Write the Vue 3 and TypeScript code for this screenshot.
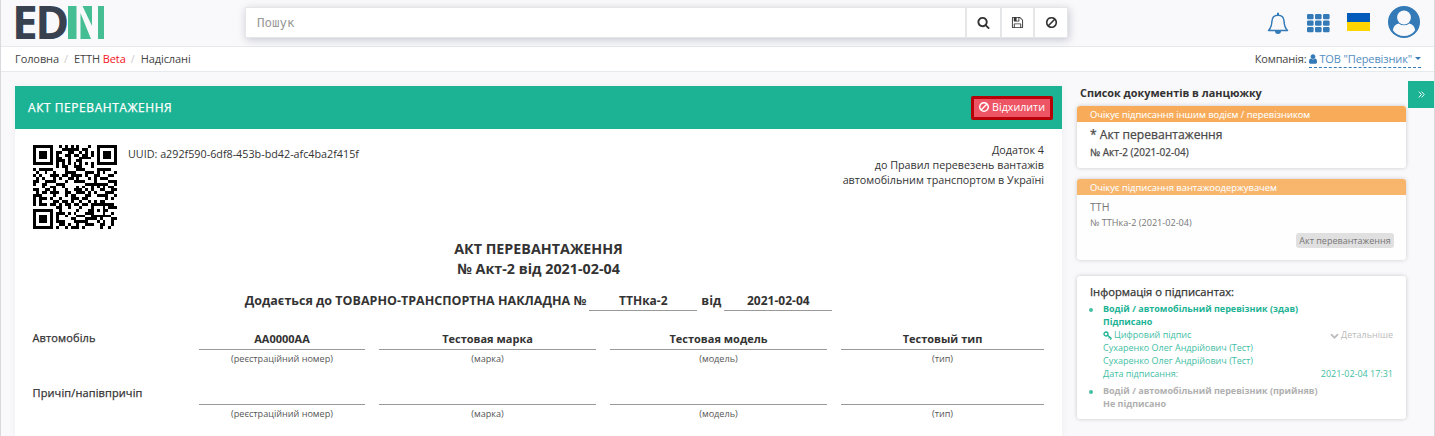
<script setup lang="ts">
type Grid = number[][]

/* ---- QR code, version 3, one error correction block ---- */
const SIZE = 29

function gfMul(a: number, b: number): number {
  let r = 0
  for (let i = 7; i >= 0; i--) {
    r = (r << 1) ^ ((r >>> 7) * 0x11d)
    r ^= ((b >>> i) & 1) * a
  }
  return r
}

function eccBytes(data: number[], degree: number): number[] {
  const gen: number[] = new Array(degree).fill(0)
  gen[degree - 1] = 1
  let root = 1
  for (let i = 0; i < degree; i++) {
    for (let j = 0; j < degree; j++) {
      gen[j] = gfMul(gen[j], root)
      if (j + 1 < degree) gen[j] ^= gen[j + 1]
    }
    root = gfMul(root, 2)
  }
  const rem: number[] = new Array(degree).fill(0)
  for (const b of data) {
    const f = b ^ (rem.shift() as number)
    rem.push(0)
    gen.forEach((g, i) => { rem[i] ^= gfMul(g, f) })
  }
  return rem
}

const masks: ((x: number, y: number) => boolean)[] = [
  (x, y) => (x + y) % 2 === 0,
  (_x, y) => y % 2 === 0,
  (x) => x % 3 === 0,
  (x, y) => (x + y) % 3 === 0,
  (x, y) => (Math.floor(x / 3) + Math.floor(y / 2)) % 2 === 0,
  (x, y) => ((x * y) % 2) + ((x * y) % 3) === 0,
  (x, y) => (((x * y) % 2) + ((x * y) % 3)) % 2 === 0,
  (x, y) => (((x + y) % 2) + ((x * y) % 3)) % 2 === 0,
]

function buildQr(text: string, level: 'L' | 'M', mask: number): Grid {
  const dataLen = level === 'L' ? 55 : 44
  const bits: number[] = []
  const push = (v: number, n: number) => { for (let i = n - 1; i >= 0; i--) bits.push((v >>> i) & 1) }
  push(4, 4)
  push(text.length, 8)
  for (const c of text) push(c.charCodeAt(0), 8)
  push(0, 4)
  while (bits.length % 8) bits.push(0)
  const data: number[] = []
  for (let i = 0; i < bits.length; i += 8) data.push(parseInt(bits.slice(i, i + 8).join(''), 2))
  for (let p = 0xec; data.length < dataLen; p ^= 0xec ^ 0x11) data.push(p)
  const all = data.concat(eccBytes(data, 70 - dataLen))

  const g: Grid = Array.from({ length: SIZE }, () => new Array(SIZE).fill(0))
  const fixed: boolean[][] = Array.from({ length: SIZE }, () => new Array(SIZE).fill(false))
  const set = (x: number, y: number, v: boolean) => {
    if (x < 0 || y < 0 || x >= SIZE || y >= SIZE) return
    g[y][x] = v ? 1 : 0
    fixed[y][x] = true
  }
  for (let i = 0; i < SIZE; i++) { set(6, i, i % 2 === 0); set(i, 6, i % 2 === 0) }
  for (const [cx, cy] of [[3, 3], [SIZE - 4, 3], [3, SIZE - 4]]) {
    for (let dy = -4; dy <= 4; dy++) for (let dx = -4; dx <= 4; dx++) {
      const d = Math.max(Math.abs(dx), Math.abs(dy))
      set(cx + dx, cy + dy, d !== 2 && d !== 4)
    }
  }
  for (let dy = -2; dy <= 2; dy++) for (let dx = -2; dx <= 2; dx++) {
    set(22 + dx, 22 + dy, Math.max(Math.abs(dx), Math.abs(dy)) !== 1)
  }
  const fmt = ((level === 'L' ? 1 : 0) << 3) | mask
  let rem = fmt
  for (let i = 0; i < 10; i++) rem = (rem << 1) ^ ((rem >>> 9) * 0x537)
  const f = ((fmt << 10) | rem) ^ 0x5412
  const bit = (i: number) => ((f >>> i) & 1) === 1
  for (let i = 0; i <= 5; i++) set(8, i, bit(i))
  set(8, 7, bit(6)); set(8, 8, bit(7)); set(7, 8, bit(8))
  for (let i = 9; i < 15; i++) set(14 - i, 8, bit(i))
  for (let i = 0; i < 8; i++) set(SIZE - 1 - i, 8, bit(i))
  for (let i = 8; i < 15; i++) set(8, SIZE - 15 + i, bit(i))
  set(8, SIZE - 8, true)

  let k = 0
  for (let right = SIZE - 1; right >= 1; right -= 2) {
    if (right === 6) right = 5
    for (let v = 0; v < SIZE; v++) for (let j = 0; j < 2; j++) {
      const x = right - j
      const y = ((right + 1) & 2) === 0 ? SIZE - 1 - v : v
      if (fixed[y][x]) continue
      const b = k < all.length * 8 ? (all[k >>> 3] >>> (7 - (k & 7))) & 1 : 0
      k++
      g[y][x] = b ^ (masks[mask](x, y) ? 1 : 0)
    }
  }
  return g
}

function penalty(g: Grid): number {
  let p = 0
  let dark = 0
  const cols = g.map((_, x) => g.map((row) => row[x]))
  for (const line of [...g, ...cols]) {
    const s = line.join('')
    for (const m of s.match(/0{5,}|1{5,}/g) ?? []) p += m.length - 2
    const padded = '0000' + s + '0000'
    for (let i = 0; i + 11 <= padded.length; i++) {
      const w = padded.slice(i, i + 11)
      if (w === '10111010000' || w === '00001011101') p += 40
    }
  }
  for (let y = 0; y < SIZE; y++) for (let x = 0; x < SIZE; x++) {
    dark += g[y][x]
    if (x && y && g[y][x] === g[y - 1][x] && g[y][x] === g[y][x - 1] && g[y][x] === g[y - 1][x - 1]) p += 3
  }
  return p + Math.floor(Math.abs((dark * 20) / (SIZE * SIZE) - 10)) * 10
}

const uuid = 'a292f590-6df8-453b-bd42-afc4ba2f415f'
const best = masks.map((_, m) => buildQr(uuid, 'M', m)).sort((a, b) => penalty(a) - penalty(b))[0]
const qrPath = best
  .flatMap((row, y) => row.map((v, x) => (v ? `M${x} ${y}h1v1h-1z` : '')))
  .join('')

interface Field { value: string; caption: string }
interface Row { label: string; fields: Field[] }
const rows: Row[] = [
  {
    label: 'Автомобіль',
    fields: [
      { value: 'АА0000АА', caption: '(реєстраційний номер)' },
      { value: 'Тестовая марка', caption: '(марка)' },
      { value: 'Тестовая модель', caption: '(модель)' },
      { value: 'Тестовый тип', caption: '(тип)' },
    ],
  },
  {
    label: 'Причіп/напівпричіп',
    fields: [
      { value: '', caption: '(реєстраційний номер)' },
      { value: '', caption: '(марка)' },
      { value: '', caption: '(модель)' },
      { value: '', caption: '(тип)' },
    ],
  },
]

const ban = 'M1440 893q0-161-87-295l-754 753q137 89 297 89 111 0 211.5-43.5t173.5-116.5 116-174.5 43-212.5zm-999 299l755-754q-135-91-300-91-148 0-273 73t-198 199-73 274q0 162 89 299zm1223-299q0 157-61 300t-163.5 246-245 164-298.5 61-298.5-61-245-164-163.5-246-61-300 61-299.5 163.5-245.5 245-164 298.5-61 298.5 61 245 164 163.5 245.5 61 299.5z'
const search = 'M1216 832q0-185-131.5-316.5t-316.5-131.5-316.5 131.5-131.5 316.5 131.5 316.5 316.5 131.5 316.5-131.5 131.5-316.5zm512 832q0 52-38 90t-90 38q-54 0-90-38l-343-342q-179 124-399 124-143 0-273.5-55.5t-225-150-150-225-55.5-273.5 55.5-273.5 150-225 225-150 273.5-55.5 273.5 55.5 225 150 150 225 55.5 273.5q0 220-124 399l343 343q37 37 37 90z'
const floppy = 'M512 1536h768v-384h-768v384zm896 0h128v-896q0-14-10-38.5t-20-34.5l-281-281q-10-10-34-20t-39-10v416q0 40-28 68t-68 28h-576q-40 0-68-28t-28-68v-416h-128v1280h128v-416q0-40 28-68t68-28h832q40 0 68 28t28 68v416zm-384-928v-320q0-13-9.5-22.5t-22.5-9.5h-192q-13 0-22.5 9.5t-9.5 22.5v320q0 13 9.5 22.5t22.5 9.5h192q13 0 22.5-9.5t9.5-22.5zm640 32v928q0 40-28 68t-68 28h-1344q-40 0-68-28t-28-68v-1344q0-40 28-68t68-28h928q40 0 88 20t76 48l280 280q28 28 48 76t20 88z'
const user = 'M1536 1399q0 109-62.5 187t-150.5 78h-854q-88 0-150.5-78t-62.5-187q0-85 8.5-160.5t31.5-152 58.5-131 94-89 134.5-34.5q131 128 313 128t313-128q76 0 134.5 34.5t94 89 58.5 131 31.5 152 8.5 160.5zm-256-887q0 159-112.5 271.5t-271.5 112.5-271.5-112.5-112.5-271.5 112.5-271.5 271.5-112.5 271.5 112.5 112.5 271.5z'
const chevron = 'M1683 808l-742 741q-19 19-45 19t-45-19l-742-741q-19-19-19-45.5t19-45.5l166-165q19-19 45-19t45 19l531 531 531-531q19-19 45-19t45 19l166 165q19 19 19 45.5t-19 45.5z'
</script>

<template>
  <div class="page">
    <header class="top">
      <svg class="logo" width="92" height="36" viewBox="0 0 92 36">
        <text class="logo-text" x="-3" y="34">ED</text>
        <g fill="#45be93">
          <rect x="53" y="1" width="8.5" height="33" />
          <path d="M65.500 8V34H76zM67.500 1H77V21zM83 1h6v33h-6z" />
        </g>
      </svg>
      <div class="search">
        <div class="search-input">Пошук</div>
        <div class="search-btn"><svg width="13" height="13" viewBox="0 0 1792 1792"><path :d="search" /></svg></div>
        <div class="search-btn mid"><svg width="13" height="13" viewBox="0 0 1792 1792"><path :d="floppy" /></svg></div>
        <div class="search-btn last"><svg width="13" height="13" viewBox="0 0 1792 1792"><path :d="ban" /></svg></div>
      </div>
      <div class="tools">
        <svg width="22" height="24" viewBox="0 0 22 24">
          <path d="M1.500 18.500C4 16 4.800 13.500 4.900 9.500C5.100 5.500 7.500 3.300 11 3.300s5.900 2.200 6.100 6.200c.1 4 .9 6.500 3.400 9z" fill="none" stroke="#337ab7" stroke-width="1.500" stroke-linejoin="round" />
          <path d="M10 .8h2v3h-2zM8 19h6a3 3 0 0 1-6 0z" fill="#337ab7" />
        </svg>
        <svg class="grid-icon" width="23" height="19" viewBox="0 0 23 19" fill="#337ab7">
          <template v-for="r in 3" :key="r">
            <rect v-for="c in 3" :key="c" :x="(c - 1) * 8" :y="(r - 1) * 6.5" width="6.600" height="5.300" rx="1.300" />
          </template>
        </svg>
        <div class="flag"></div>
        <svg class="avatar" width="32" height="32" viewBox="0 0 32 32">
          <circle cx="16" cy="16" r="16" fill="#337ab7" />
          <path d="M4.800 24.200C5.500 20 7.700 17.800 10.700 17.400a8.500 8.500 0 0 0 10.600 0c3 .4 5.200 2.600 5.900 6.800A13.700 13.700 0 0 1 4.800 24.200z" fill="#f9f9fb" />
          <circle cx="16" cy="11.500" r="6.900" fill="#f9f9fb" />
        </svg>
      </div>
    </header>

    <nav class="crumbs">
      <span>Головна</span><i>/</i><span>ЕТТН <b>Beta</b></span><i>/</i><span>Надіслані</span>
      <div class="company">
        <span>Компанія:</span>
        <a><svg width="8" height="10" viewBox="256 128 1280 1536"><path :d="user" /></svg><span class="company-name">ТОВ "Перевізник"</span><em class="caret"></em></a>
      </div>
    </nav>

    <div class="body">
      <main class="panel">
        <div class="panel-head">
          <span class="medium">АКТ ПЕРЕВАНТАЖЕННЯ</span>
          <button class="reject"><svg width="10" height="10" viewBox="128 128 1536 1536"><path :d="ban" /></svg>Відхилити</button>
        </div>
        <div class="doc">
          <div class="doc-top">
            <svg class="qr" width="84" height="84" viewBox="0 0 29 29" shape-rendering="crispEdges"><path :d="qrPath" /></svg>
            <div class="uuid">UUID: {{ uuid }}</div>
            <div class="appendix">Додаток 4<br />до Правил перевезень вантажів<br />автомобільним транспортом в Україні</div>
          </div>
          <h1>АКТ ПЕРЕВАНТАЖЕННЯ<br />№ Акт-2 від 2021-02-04</h1>
          <div class="attached">
            <span>Додається до ТОВАРНО-ТРАНСПОРТНА НАКЛАДНА №</span>
            <span class="blank">ТТНка-2</span>
            <span class="vid">від</span>
            <span class="blank">2021-02-04</span>
          </div>
          <div v-for="row in rows" :key="row.label" class="row">
            <div class="row-label medium">{{ row.label }}</div>
            <div v-for="f in row.fields" :key="f.caption">
              <div class="value">{{ f.value }}</div>
              <div class="caption">{{ f.caption }}</div>
            </div>
          </div>
        </div>
      </main>

      <aside class="side">
        <h2>Список документів в ланцюжку</h2>
        <section class="card current">
          <div class="status medium">Очікує підписання іншим водієм / перевізником</div>
          <div class="doc-name medium">* Акт перевантаження</div>
          <div class="doc-no medium">№ Акт-2 (2021-02-04)</div>
        </section>
        <section class="card other">
          <div class="status medium">Очікує підписання вантажоодержувачем</div>
          <div class="doc-name">ТТН</div>
          <div class="doc-no">№ ТТНка-2 (2021-02-04)</div>
          <div class="tag">Акт перевантаження</div>
        </section>
        <section class="card signers">
          <h3 class="medium">Інформація о підписантах:</h3>
          <div class="signer">
            <div class="strong">Водій / автомобільний перевізник (здав)</div>
            <div class="strong">Підписано</div>
            <div class="line">
              <span><svg class="key" width="9" height="9" viewBox="0 0 9 9"><circle cx="3" cy="3" r="2" fill="none" stroke="#1bb394" stroke-width="1.300" /><path d="M4.500 4.300L8.500 7.500M5.700 7.500L6.800 6M7.400 8.700L8.300 7.400" fill="none" stroke="#1bb394" stroke-width="1.200" /></svg>Цифровий підпис</span>
              <span class="details"><svg width="9" height="9" viewBox="0 0 1792 1792"><path :d="chevron" /></svg>Детальніше</span>
            </div>
            <div class="line">Сухаренко Олег Андрійович (Тест)</div>
            <div class="line">Сухаренко Олег Андрійович (Тест)</div>
            <div class="line"><span>Дата підписання:</span><span>2021-02-04 17:31</span></div>
          </div>
          <div class="signer pending">
            <div class="strong">Водій / автомобільний перевізник (прийняв)</div>
            <div class="strong">Не підписано</div>
          </div>
        </section>
      </aside>
      <div class="toggle">
        <svg width="7" height="7" viewBox="0 0 7 7" fill="none" stroke="#fff" stroke-width=".9"><path d="M.8.6l2.600 2.900L.8 6.400M3.600.6l2.600 2.900-2.600 2.900" /></svg>
      </div>
    </div>
  </div>
</template>

<style>
body { background: #f9f9fb; overflow: hidden; }
</style>

<style scoped>
* { box-sizing: border-box; }
.page {
  width: 1435px; height: 436px; overflow: hidden;
  border-left: 1px solid #d9d9dd; border-right: 1px solid #d9d9dd;
  background: #f9f9fb; color: #333;
  font-family: "Open Sans", "Noto Sans", sans-serif; font-size: 11px;
}
.medium { -webkit-text-stroke: .25px currentColor; }
.top { height: 47px; border-bottom: 1px solid #e7eaec; display: flex; padding-left: 14px; }
.logo { margin-top: 5px; flex: none; overflow: visible; }
.logo-text { font: 700 46px/36px "Open Sans", sans-serif; letter-spacing: -2.500px; fill: #384150; }
.search {
  display: flex; margin: 7px 0 0 138px; height: 31px; width: 823px;
  border: 1px solid #e5e6e7; background: #fff; box-shadow: 1px 2px 8px rgba(50, 50, 93, .25);
}
.search-input {
  flex: 1; padding-left: 11px; line-height: 29px; color: #999;
  font-family: "DejaVu Sans Mono", monospace; font-size: 12.500px;
}
.search-btn { width: 35px; border-left: 2px solid #e5e6e7; display: flex; align-items: center; justify-content: center; fill: #333; }
.search-btn.mid { width: 33px; }
.search-btn.last { width: 34px; }
.tools { display: flex; margin-left: 199px; }
.tools > svg:first-child { margin-top: 12px; }
.grid-icon { margin: 14px 0 0 18px; }
.flag { width: 23px; height: 18px; margin: 13px 0 0 17px; background: linear-gradient(#005bbb 50%, #ffd500 50%); }
.avatar { margin: 6px 0 0 18px; }
.crumbs {
  height: 25px; background: #fff; border-bottom: 1px solid #e7eaec; line-height: 23px;
  display: flex; padding: 0 13px 0 14px; font-size: 11px; color: #444;
}
.crumbs > span { letter-spacing: -.09px; }
.crumbs i { font-style: normal; color: #ccc; width: 15px; padding-left: 5px; }
.crumbs b { font-weight: 400; color: #f5121d; }
.company { margin-left: auto; display: flex; gap: 3px; }
.company > span { letter-spacing: -.15px; }
.company a { color: #337ab7; fill: #337ab7; height: 21px; border-bottom: 1px dashed #337ab7; display: flex; align-items: center; }
.company-name { margin: 3px 0 0 2px; line-height: 24px; opacity: .85; letter-spacing: -.12px; }
.company svg { margin-top: 3px; }
.caret { border: 3px solid transparent; border-top-color: #337ab7; border-bottom: 0; margin: 3px 0 0 3px; }
.body { display: flex; align-items: flex-start; }
.panel { width: 1047px; height: 350px; margin: 14px 0 0 14px; background: #fff; box-shadow: 0 0 8px rgba(0, 0, 0, .05); }
.panel-head {
  height: 43px; background: #1bb394; color: #fff; font-size: 12px;
  display: flex; align-items: center; justify-content: space-between; padding: 0 9px 0 13px;
}
.panel-head > span { letter-spacing: .55px; }
.reject {
  width: 82px; height: 24px; border: 3px solid #b70008; border-radius: 2px; background: #ed5565;
  color: #fff; fill: #fff; font: 400 10.700px "Open Sans", sans-serif; padding: 0 0 1px; display: flex; align-items: center; justify-content: center; gap: 3px;
}
.doc { padding: 16px 18px 0; }
.doc-top { display: flex; height: 94px; }
.qr { flex: none; }
.uuid { margin: 1px 0 0 11px; line-height: 15px; font-size: 10.780px; }
.appendix { margin: -2px 0 0 auto; text-align: right; line-height: 15px; font-size: 10.750px; }
h1 { margin: 0; font-size: 14.300px; line-height: 20px; font-weight: 700; text-align: center; }
.attached { display: flex; justify-content: center; margin-top: 9px; font-size: 12.500px; font-weight: 700; line-height: 25px; height: 23px; }
.attached .blank { width: 108px; border-bottom: 1px solid #999; text-align: center; height: 23px; margin-left: 3px; font-size: 12px; }
.attached .vid { margin-left: 4px; }
.row { display: grid; grid-template-columns: 152px 166px 217px 217px 203px; column-gap: 14px; height: 55px; }
.row-label { font-size: 11px; line-height: 14px; padding-top: 20px; letter-spacing: .12px; margin-left: -.5px; }
.value { height: 39px; padding-top: 21px; border-bottom: 1px solid #999; font-weight: 700; line-height: 14px; text-align: center; }
.caption { font-size: 9.100px; line-height: 17px; color: #555; text-align: center; }
.side { width: 329px; margin: 14px 0 0 15px; }
h2 { margin: 0 0 0 3px; font-size: 10.850px; line-height: 14px; height: 20px; font-weight: 700; }
.card { background: #fff; border-radius: 3px; box-shadow: 0 0 4px rgba(0, 0, 0, .2); overflow: hidden; }
.status { height: 16px; line-height: 17px; padding-left: 13px; background: #f8ac59; color: #fff; font-size: 9.370px; }
.status.medium { -webkit-text-stroke-width: .1px; }
.current { height: 62px; color: #4a4a4a; }
.current .doc-name { font-size: 12.100px; line-height: 18px; padding: 4px 0 0 13px; }
.current .doc-no { font-size: 10px; line-height: 14px; padding: 1px 0 0 13px; }
.other { height: 81px; margin-top: 11px; opacity: .88; color: #666; }
.other .doc-name { font-size: 10.600px; line-height: 16px; padding: 4px 0 0 13px; }
.other .doc-no { font-size: 9.150px; line-height: 14px; padding: 1px 0 0 13px; }
.tag { width: 98px; height: 15px; margin: 3px 12px 0 auto; background: #ddd; border-radius: 3px; font-size: 9px; line-height: 15px; text-align: center; color: #666; }
.signers { height: 143px; margin-top: 16px; padding: 8px 13px 0; color: #3fbea4; font-size: 9px; }
h3 { margin: 0; color: #333; font-size: 11.200px; line-height: 15px; font-weight: 400; }
.signer { padding-left: 13px; margin-top: 4px; position: relative; }
.signer + .signer { margin-top: 5px; }
.signer::before { content: ""; position: absolute; left: -1px; top: 5px; width: 4px; height: 4px; border-radius: 50%; background: #45bea4; }
.strong { font-weight: 700; line-height: 12.500px; color: #1bb394; }
.line { line-height: 13px; display: flex; justify-content: space-between; }
.key { margin-right: 2px; vertical-align: -2px; }
.details { color: #bbb; fill: #bbb; }
.details svg { vertical-align: -2px; margin-right: 2px; }
.pending .strong { color: #b0b0b0; }
.toggle { width: 26px; height: 27px; margin: 9px 0 0 2px; background: #1bb394; display: flex; align-items: center; justify-content: center; }
</style>
